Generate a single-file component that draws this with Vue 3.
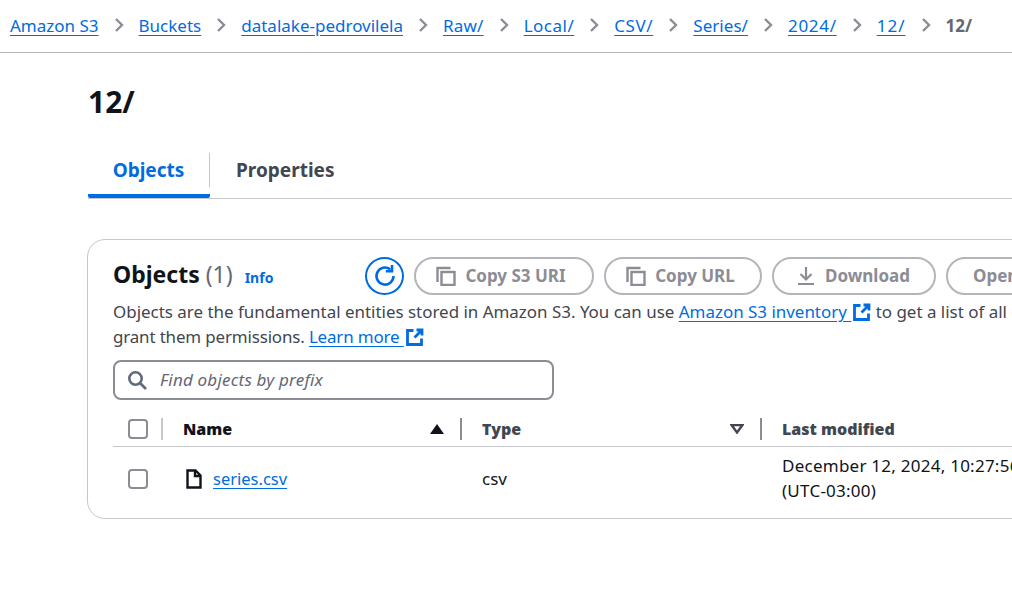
<script setup>
// tracking per crumb: the path segments run a little wider than Noto Sans
const crumbs = [
  { label: 'Amazon S3', track: 0 },
  { label: 'Buckets', track: 0 },
  { label: 'datalake-pedrovilela', track: 0 },
  { label: 'Raw/', track: 0.2 },
  { label: 'Local/', track: 0.5 },
  { label: 'CSV/', track: 0.6 },
  { label: 'Series/', track: 0.05 },
  { label: '2024/', track: 0.7 },
  { label: '12/', track: 1 },
]
</script>

<template>
  <div class="page">
    <nav class="crumbs">
      <template v-for="c in crumbs" :key="c.label">
        <a class="link" :style="{ letterSpacing: c.track + 'px' }">{{ c.label }}</a>
        <svg class="chev" width="16" height="16" viewBox="0 0 16 16"><path d="M5 2l6 6-6 6" fill="none" stroke="#8c8c94" stroke-width="2.4" /></svg>
      </template>
      <span class="crumb-current">12/</span>
    </nav>

    <main class="content">
      <h1 class="title">12/</h1>

      <div class="tabs">
        <div class="tab active"><span class="tab-label">Objects</span></div>
        <div class="tab"><span class="tab-label">Properties</span></div>
      </div>

      <section class="card">
        <header class="card-head">
          <div class="head-title">
            <h2>Objects <span class="count">(1)</span></h2>
            <a class="info">Info</a>
          </div>
          <div class="actions">
            <button class="refresh">
              <svg width="26" height="26" viewBox="0 0 26 26" fill="none" stroke="#006ce0" stroke-width="2.6"><path d="M21.500 13a8.500 8.500 0 1 1-3.200-6.600" /><path d="M20 2v6.200h-6.200" /></svg>
            </button>
            <button class="btn w-uri">
              <svg width="20" height="20" viewBox="0 0 20 20" fill="none" stroke="#8c8c94" stroke-width="2.4"><path d="M1.500 16V2h13" /><rect x="5.500" y="6" width="13" height="13" /></svg>
              Copy S3 URI
            </button>
            <button class="btn w-url">
              <svg width="20" height="20" viewBox="0 0 20 20" fill="none" stroke="#8c8c94" stroke-width="2.4"><path d="M1.500 16V2h13" /><rect x="5.500" y="6" width="13" height="13" /></svg>
              Copy URL
            </button>
            <button class="btn w-dl">
              <svg width="20" height="20" viewBox="0 0 20 20" fill="none" stroke="#8c8c94" stroke-width="2.200"><path d="M10 1v12M4.500 8l5.500 5.500L15.500 8M2 18h16" /></svg>
              Download
            </button>
            <button class="btn w-open">Open</button>
          </div>
        </header>

        <p class="desc">
          Objects are the fundamental entities stored in Amazon S3. You can use
          <a class="link">Amazon S3 inventory&nbsp;</a><svg class="ext" width="18" height="18" viewBox="0 0 18 18" fill="none" stroke="#006ce0" stroke-width="2.800"><path d="M7.500 2.500h-6v14h14v-6" /><path d="M10.500 2h5.500v5.500M15.500 2.500L8.500 9.500" /></svg>
          to get a list of all objects in your bucket. For others to access your objects, you'll need to explicitly<br />
          <span class="tight">grant them permissions. <a class="link">Learn more&nbsp;</a></span><svg class="ext" width="18" height="18" viewBox="0 0 18 18" fill="none" stroke="#006ce0" stroke-width="2.800"><path d="M7.500 2.500h-6v14h14v-6" /><path d="M10.500 2h5.500v5.500M15.500 2.500L8.500 9.500" /></svg>
        </p>

        <div class="search">
          <svg width="20" height="20" viewBox="0 0 20 20" fill="none" stroke="#5f6b7a" stroke-width="2.600"><circle cx="8.500" cy="8.500" r="6.200" /><path d="M13 13l6 6" /></svg>
          <span>Find objects by prefix</span>
        </div>

        <div class="table">
          <div class="row head">
            <div class="cell check"><i class="box"></i><i class="sep light"></i></div>
            <div class="cell name-col">
              <b class="dark">Name</b>
              <svg width="14" height="10" viewBox="0 0 14 10"><path d="M7 0l7 10H0z" fill="#0f141a" /></svg>
              <i class="sep"></i>
            </div>
            <div class="cell type-col">
              <b>Type</b>
              <svg width="14" height="10" viewBox="0 0 14 10"><path d="M1.500 1h11L7 8.500z" fill="none" stroke="#424650" stroke-width="2.400" /></svg>
              <i class="sep"></i>
            </div>
            <div class="cell"><b>Last modified</b></div>
          </div>
          <div class="row body">
            <div class="cell check"><i class="box"></i></div>
            <div class="cell file">
              <svg width="16" height="20" viewBox="0 0 16 20" fill="none" stroke="#0f141a" stroke-width="2.400"><path d="M1.500 1.500h8l5 5v12h-13z" /><path d="M9 1.500v5.500h5.500" /></svg>
              <a class="link">series.csv</a>
            </div>
            <div class="cell">csv</div>
            <div class="cell date">December 12, 2024, 10:27:56<br />(UTC-03:00)</div>
          </div>
        </div>
      </section>
    </main>
  </div>
</template>

<style>
html, body {
  margin: 0;
  background: #fff;
  overflow: hidden;
}
</style>

<style scoped>
.page {
  width: 1012px;
  height: 616px;
  overflow: hidden;
  font-family: "Noto Sans", sans-serif;
  font-size: 17px;
  line-height: 25px;
  color: #0f141a;
}
.link {
  color: #006ce0;
  text-decoration: underline;
  text-underline-offset: 3px;
}
.crumbs {
  height: 50px;
  padding: 0 0 2px 10px;
  border-bottom: 1px solid #b4b4bb;
  display: flex;
  align-items: center;
  gap: 12px;
  white-space: nowrap;
}
.chev {
  flex: none;
}
.crumb-current {
  font-weight: 700;
  color: #656871;
}
.content {
  padding-left: 87px;
}
.title {
  margin: 0;
  padding: 29px 0 0 1px;
  font-size: 30px;
  line-height: 40px;
  font-weight: 700;
}
.tabs {
  margin-top: 31px;
  margin-left: 1px;
  height: 45px;
  display: flex;
  border-bottom: 1px solid #c6c6cd;
}
.tab {
  height: 45px;
  box-sizing: border-box;
  font-size: 19px;
  font-weight: 700;
  color: #424650;
}
.tab-label {
  display: block;
  height: 34px;
  line-height: 34px;
  padding: 0 26px;
}
.tab.active {
  width: 122px;
  color: #006ce0;
  border-bottom: 4px solid #006ce0;
  border-radius: 2px;
  text-align: center;
}
.tab.active .tab-label {
  padding: 0;
  border-right: 1px solid #c6c6cd;
}
.card {
  margin-top: 40px;
  width: 1200px;
  height: 280px;
  box-sizing: border-box;
  border: 1px solid #c6c6cd;
  border-radius: 18px;
  padding: 17px 0 0 25px;
}
.card-head {
  display: flex;
  align-items: center;
  height: 38px;
}
.head-title {
  width: 252px;
  display: flex;
  align-items: baseline;
  gap: 12px;
  padding-bottom: 4px;
}
h2 {
  margin: 0;
  font-size: 23px;
  line-height: 34px;
  font-weight: 700;
  white-space: nowrap;
}
.count {
  font-weight: 400;
  color: #656871;
}
.info {
  color: #006ce0;
  font-size: 14px;
  font-weight: 700;
}
.actions {
  display: flex;
  gap: 10px;
}
.refresh {
  width: 39px;
  height: 38px;
  padding: 0;
  background: #fff;
  border: 2px solid #006ce0;
  border-radius: 50%;
  display: flex;
  align-items: center;
  justify-content: center;
}
.btn {
  height: 38px;
  box-sizing: border-box;
  background: #fff;
  border: 2px solid #b4b4bb;
  border-radius: 19px;
  color: #8c8c94;
  font: 700 17px/20px "Noto Sans", sans-serif;
  display: flex;
  align-items: center;
  justify-content: center;
  gap: 9px;
  white-space: nowrap;
  padding: 0 0 1px;
}
.w-uri { width: 180px; padding-right: 6px; }
.w-url { width: 158px; padding-right: 5px; }
.w-dl { width: 164px; padding-right: 2px; }
.w-open {
  width: 120px;
  justify-content: flex-start;
  padding-left: 25px;
}
.desc {
  margin: 4px 0 0;
  font-size: 16.95px;
  color: #424650;
  white-space: nowrap;
}
.tight {
  letter-spacing: -0.15px;
}
.ext {
  margin-left: 2px;
  vertical-align: -3px;
}
.search {
  margin-top: 11px;
  width: 441px;
  height: 40px;
  box-sizing: border-box;
  border: 2px solid #8c8c94;
  border-radius: 8px;
  display: flex;
  align-items: center;
  gap: 13px;
  padding: 0 0 1px 12px;
  font-style: italic;
  letter-spacing: 0.2px;
  color: #656871;
}
.table {
  margin-top: 12px;
}
.row {
  display: grid;
  grid-template-columns: 70px 299px 300px 1fr;
}
.row.head {
  height: 34px;
  border-bottom: 1px solid #c6c6cd;
  align-items: center;
  font-size: 16px;
  font-weight: 700;
  color: #424650;
}
.row.body {
  height: 65px;
  box-sizing: border-box;
  padding-bottom: 2px;
  align-items: center;
}
.cell {
  display: flex;
  align-items: center;
  white-space: nowrap;
}
.check {
  padding-left: 15px;
}
.box {
  display: block;
  width: 20px;
  height: 20px;
  box-sizing: border-box;
  border: 2px solid #8c8c94;
  border-radius: 4px;
}
.sep {
  display: block;
  width: 2px;
  height: 22px;
  background: #8c8c94;
  margin-left: 16px;
  margin-right: 20px;
}
.sep.light {
  background: #c6c6cd;
  margin-left: 13px;
  margin-right: 0;
}
.name-col b, .type-col b {
  flex: 1;
}
.dark {
  color: #0f141a;
}
.file {
  gap: 11px;
  padding-left: 3px;
  font-size: 16.5px;
}
.date {
  display: block;
  padding-bottom: 2px;
  letter-spacing: 0.25px;
}
</style>
